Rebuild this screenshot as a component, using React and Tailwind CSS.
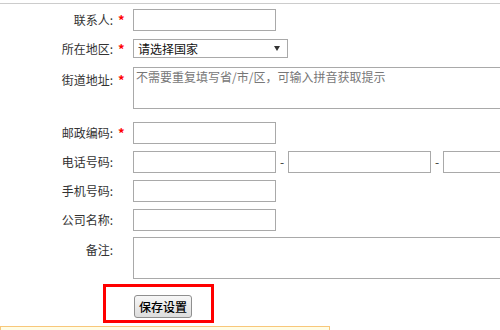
import React from "react";

const font = { fontFamily: '"Noto Sans CJK SC", "Noto Sans", sans-serif' };

function Label({ text, star, top }) {
  return (
    <div className={`flex shrink-0 ${top ? "pt-[4px] leading-[18px]" : "items-center self-stretch"}`}>
      <div className="w-[113px] text-right text-[12px] text-[#333]">{text}</div>
      <div className="w-[20px] pl-[5px] text-[13px] font-bold text-[#ff0000]">{star ? "*" : ""}</div>
    </div>
  );
}

function Input() {
  return <div className="w-[143px] h-[22px] border border-[#a9a9a9] bg-white shrink-0" />;
}

function Dash() {
  return <div className="w-[12px] shrink-0 text-center text-[12px] leading-[22px] text-[#333]">-</div>;
}

export default function App() {
  return (
    <div className="w-[500px] h-[330px] overflow-hidden bg-white" style={font}>
      <div className="h-[4px] border-b border-[#cccccc]" />

      <div className="mt-[5px] flex">
        <Label text="联系人:" star />
        <Input />
      </div>

      <div className="mt-[8px] flex">
        <Label text="所在地区:" star />
        <div className="w-[155px] h-[19px] shrink-0 border border-[#a9a9a9] flex items-center justify-between pl-[4px] pr-[7px] text-[12px] text-[#111]">
          <span className="leading-[17px]">请选择国家</span>
          <svg width="6" height="5" viewBox="0 0 6 5">
            <polygon points="0,0 6,0 3,5" fill="#333" />
          </svg>
        </div>
      </div>

      <div className="mt-[8px] flex">
        <Label text="街道地址:" star top />
        <textarea
          className="w-[400px] h-[42px] shrink-0 border border-[#a9a9a9] px-[2px] py-[1px] text-[12px] leading-[16px] resize-none outline-none placeholder:text-[#777]"
          style={font}
          placeholder="不需要重复填写省/市/区，可输入拼音获取提示"
        />
      </div>

      <div className="mt-[13px] flex">
        <Label text="邮政编码:" star />
        <Input />
      </div>

      <div className="mt-[7px] flex">
        <Label text="电话号码:" />
        <Input />
        <Dash />
        <Input />
        <Dash />
        <Input />
      </div>

      <div className="mt-[7px] flex">
        <Label text="手机号码:" />
        <Input />
      </div>

      <div className="mt-[7px] flex">
        <Label text="公司名称:" />
        <Input />
      </div>

      <div className="mt-[6px] flex">
        <Label text="备注:" top />
        <div className="w-[400px] h-[42px] border border-[#a9a9a9] shrink-0" />
      </div>

      <div className="mt-[5px] ml-[103px] w-[111px] h-[39px] border-[3px] border-[#ff0000] pl-[28px] pt-[6px]">
        <button
          className="w-[58px] h-[23px] rounded-[3px] border border-[#8f8f8f] bg-gradient-to-b from-[#f7f7f7] to-[#dddddd] text-[12px] text-black leading-[20px] font-medium"
          style={font}
        >
          保存设置
        </button>
      </div>

      <div className="mt-[3px] w-[330px] h-[20px] border border-[#f8c77a] bg-[#fffde6] pl-[1px] pt-[3px]">
        <div className="w-[5px] h-[2px] bg-[#f3d35a]" />
      </div>
    </div>
  );
}
